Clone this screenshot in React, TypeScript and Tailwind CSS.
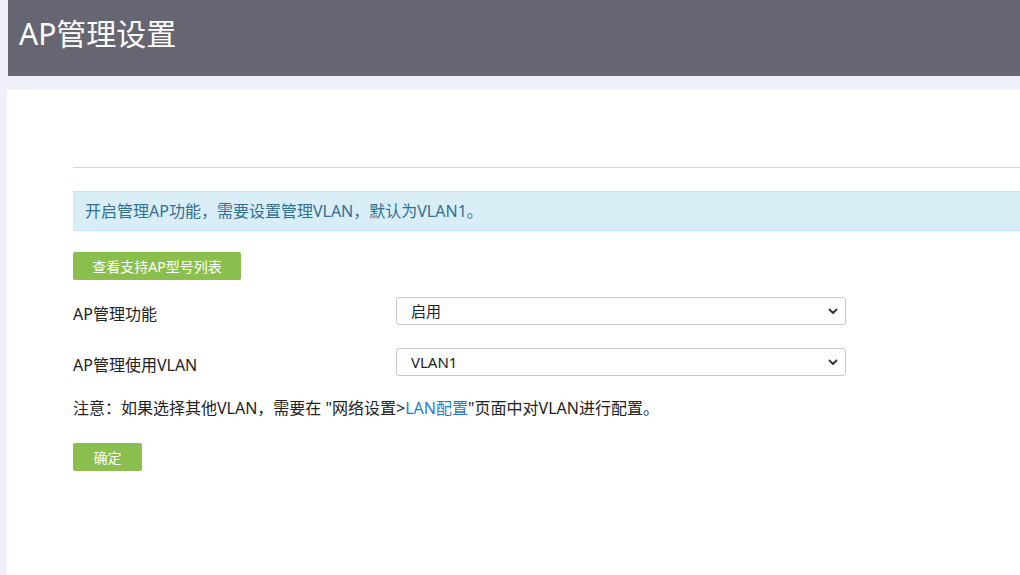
import React from "react";

const font = { fontFamily: '"Noto Sans", "Noto Sans CJK SC", sans-serif' };

function Chevron() {
  return (
    <svg width="12" height="12" viewBox="0 0 12 12" className="text-[#333]">
      <path d="M2.5 4.5 L6 8 L9.5 4.5" fill="none" stroke="currentColor" strokeWidth="1.8" strokeLinecap="round" strokeLinejoin="round" />
    </svg>
  );
}

function Select({ value }: { value: string }) {
  return (
    <div className="w-[450px] h-[28px] border border-[#c8c8c8] rounded-[3px] bg-white flex items-center justify-between pl-[14px] pr-[6px] text-[15px] text-[#222]">
      <span>{value}</span>
      <Chevron />
    </div>
  );
}

export default function App() {
  return (
    <div className="w-[1020px] h-[575px] bg-[#efeff7] overflow-hidden" style={font}>
      <div className="ml-[8px] h-[76px] bg-[#666673] flex items-center pl-[11px] pb-[8px]">
        <h1 className="text-[30px] text-white leading-none">AP管理设置</h1>
      </div>
      <div className="mt-[14px] ml-[7px] h-[485px] bg-white pl-[66px] pt-[77px]">
        <div className="h-px bg-[#d6d6d6]" />
        <div className="mt-[23px] h-[40px] bg-[#d9edf7] border-y border-[#bce8f1] flex items-center pl-[12px] text-[16px] text-[#31708f]">
          开启管理AP功能，需要设置管理VLAN，默认为VLAN1。
        </div>
        <button className="mt-[21px] h-[28px] w-[168px] bg-[#8bbf4d] rounded-[2px] text-white text-[14px] flex items-center justify-center">
          查看支持AP型号列表
        </button>
        <div className="mt-[17px] flex items-start h-[28px]">
          <div className="w-[323px] text-[16px] text-[#222] pt-[6px] leading-[22px]">AP管理功能</div>
          <Select value="启用" />
        </div>
        <div className="mt-[23px] flex items-start h-[28px]">
          <div className="w-[323px] text-[16px] text-[#222] pt-[6px] leading-[22px]">AP管理使用VLAN</div>
          <Select value="VLAN1" />
        </div>
        <div className="mt-[20px] text-[16px] leading-[24px] text-[#222]">
          注意：如果选择其他VLAN，需要在 "网络设置&gt;<span className="text-[#2a7ac7]">LAN配置</span>"页面中对VLAN进行配置。
        </div>
        <button className="mt-[23px] h-[28px] w-[69px] bg-[#8bbf4d] rounded-[2px] text-white text-[14px] flex items-center justify-center">
          确定
        </button>
      </div>
    </div>
  );
}
